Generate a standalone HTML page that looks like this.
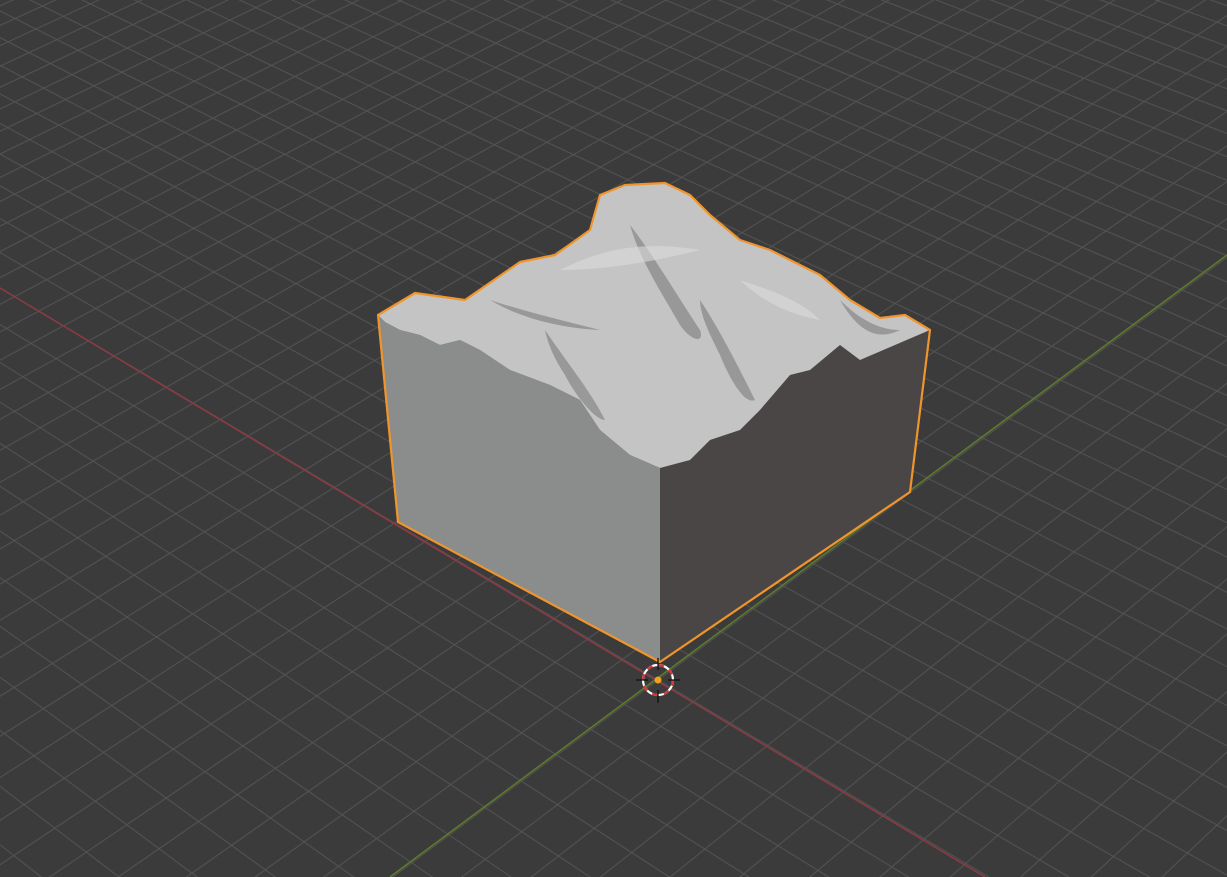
<!DOCTYPE html>
<html><head><meta charset="utf-8"><style>
html,body{margin:0;padding:0;background:#3b3b3b;overflow:hidden;width:1227px;height:877px}
svg{display:block}
</style></head><body>
<svg id="s" width="1227" height="877" viewBox="0 0 1227 877" xmlns="http://www.w3.org/2000/svg">
<rect width="1227" height="877" fill="#3b3b3b"/>
<g id="grid"></g>
<line x1="0" y1="288" x2="985" y2="877" stroke="#8a3a44" stroke-width="1.6"/>
<line x1="1227" y1="255" x2="390" y2="877" stroke="#5e7a2c" stroke-width="1.6"/>
<polygon fill="#8b8c8c" points="378,315 385,322 400,330 420,335 440,345 460,340 480,350 510,370 550,385 580,400 600,430 630,455 660,468 660,662 398,522"/>
<polygon fill="#4a4646" points="660,468 690,460 710,440 740,430 760,410 790,375 810,370 840,345 860,360 895,345 930,330 910,492 660,662"/>
<polygon fill="#c4c4c4" points="378,315 415,293 465,300 520,262 555,255 590,230 600,195 625,185 665,183 690,195 710,215 740,240 770,250 800,265 820,275 850,300 880,318 905,315 930,330 895,345 860,360 840,345 810,370 790,375 760,410 740,430 710,440 690,460 660,468 630,455 600,430 580,400 550,385 510,370 480,350 460,340 440,345 420,335 400,330 385,322"/>
<g fill="#8e8e8e" opacity="0.8">
<path d="M630,225 C650,250 680,300 700,330 C705,345 690,340 680,325 C660,290 640,260 630,225Z"/>
<path d="M700,300 C720,330 740,370 755,400 C745,405 730,380 720,355 C710,335 700,315 700,300Z"/>
<path d="M545,330 C565,360 590,390 605,420 C595,420 575,395 565,375 C555,360 548,345 545,330Z"/>
<path d="M490,300 C520,310 560,320 600,330 C560,328 520,318 490,300Z"/>
<path d="M840,300 C860,320 880,330 900,330 C880,340 860,335 840,300Z"/>
</g>
<g fill="#dcdcdc" opacity="0.6">
<path d="M560,270 C600,250 640,240 700,250 C660,260 610,270 560,270Z"/>
<path d="M740,280 C770,290 800,300 820,320 C790,315 760,300 740,280Z"/>
</g>
<polygon fill="none" stroke="#f0952c" stroke-width="2.2" stroke-linejoin="round" points="378,315 415,293 465,300 520,262 555,255 590,230 600,195 625,185 665,183 690,195 710,215 740,240 770,250 800,265 820,275 850,300 880,318 905,315 930,330 910,492 660,662 398,522"/>
<circle cx="658" cy="680" r="15" fill="none" stroke="#fff" stroke-width="2.2"/>
<circle cx="658" cy="680" r="15" fill="none" stroke="#d23a3a" stroke-width="2.2" stroke-dasharray="5.9 5.9"/>
<line x1="658" y1="658" x2="658" y2="670" stroke="#111" stroke-width="1.3"/>
<line x1="658" y1="690" x2="658" y2="703" stroke="#111" stroke-width="1.3"/>
<line x1="636" y1="680" x2="648" y2="680" stroke="#111" stroke-width="1.3"/>
<line x1="668" y1="680" x2="680" y2="680" stroke="#111" stroke-width="1.3"/>
<circle cx="658" cy="680" r="3.5" fill="#f0a020"/>
</svg>
<script>
(function(){
var O=[658,680],R=[-3000,-1500],G=[4000,-1803],a=0.0097,b=0.0098;
function P(u,v){var w=a*u+b*v+1;return[(a*u*R[0]+b*v*G[0]+O[0])/w,(a*u*R[1]+b*v*G[1]+O[1])/w];}
var s='',N=-35,M=200;
for(var k=N;k<=M;k++){
 var op=k>60?0.6:0.85;
 var p1=P(k,N),p2=P(k,M),q1=P(N,k),q2=P(M,k);
 s+='<line x1="'+p1[0].toFixed(1)+'" y1="'+p1[1].toFixed(1)+'" x2="'+p2[0].toFixed(1)+'" y2="'+p2[1].toFixed(1)+'" stroke="#555" stroke-opacity="'+op+'" stroke-width="1.2"/>';
 s+='<line x1="'+q1[0].toFixed(1)+'" y1="'+q1[1].toFixed(1)+'" x2="'+q2[0].toFixed(1)+'" y2="'+q2[1].toFixed(1)+'" stroke="#555" stroke-opacity="'+op+'" stroke-width="1.2"/>';
}
document.getElementById('grid').innerHTML=s;
})();
</script>
</body></html>
